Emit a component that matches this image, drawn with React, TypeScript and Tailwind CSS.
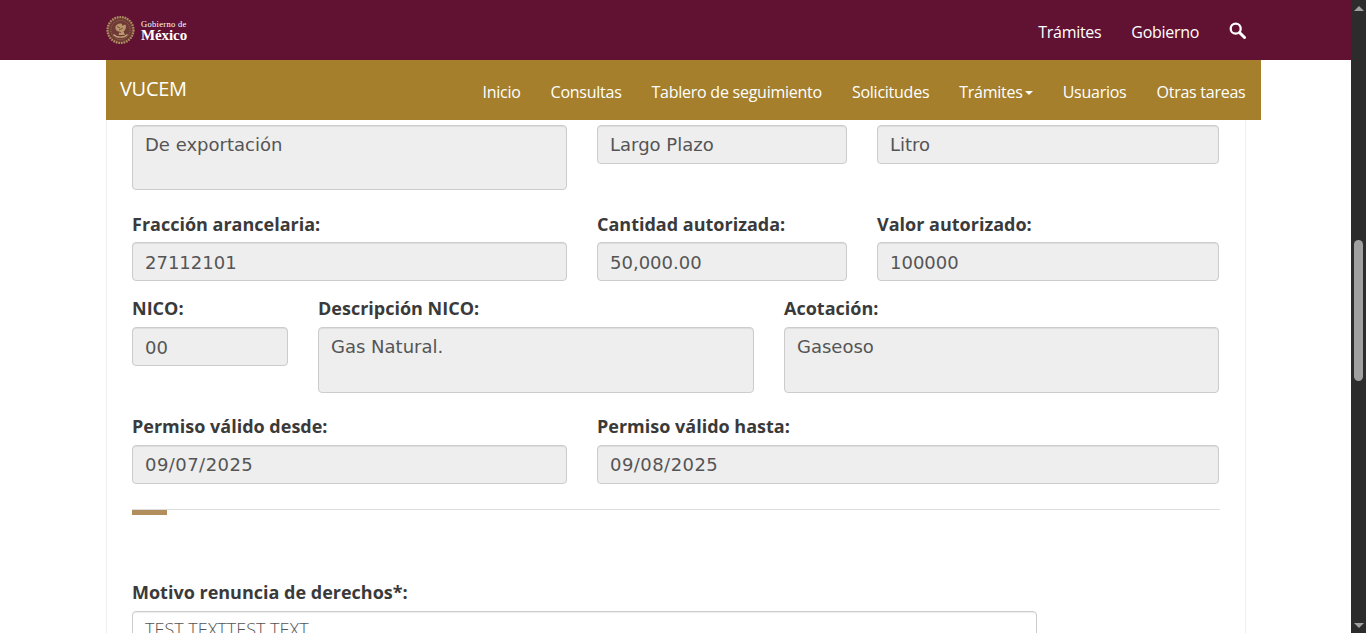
const navLinks = ["Inicio", "Consultas", "Tablero de seguimiento", "Solicitudes"];

function Field({
  label,
  value,
  className,
  height = "h-[39px]",
  labelGap = "mb-[9px]",
  valueClass = "pt-[6px]",
}: {
  label?: string;
  value: string;
  className: string;
  height?: string;
  labelGap?: string;
  valueClass?: string;
}) {
  return (
    <div className={className}>
      {label && <label className={`${labelGap} block text-[18px] font-bold leading-[20px] text-[#3a3a3a]`}>{label}</label>}
      <div
        className={`rounded-[4px] border border-[#ccc] bg-[#eee] px-3 font-['DejaVu_Sans',sans-serif] text-[18px] leading-[26px] text-[#555] shadow-[inset_0_1px_1px_rgba(0,0,0,0.075)] ${height} ${valueClass}`}
      >
        {value}
      </div>
    </div>
  );
}

function Logo() {
  return (
    <div className="flex items-center gap-[6px]">
      <svg width="29" height="30" viewBox="0 0 29 30" aria-hidden="true">
        <circle cx="14.5" cy="15" r="13.4" fill="#6f3a35" />
        <circle cx="14.5" cy="15" r="13" fill="none" stroke="#b08f63" strokeWidth="2.2" strokeDasharray="1.6 1" />
        <circle cx="14.5" cy="15" r="9.6" fill="none" stroke="#94714f" strokeWidth="1" strokeDasharray="1 1" />
        <path d="M9 12.5c1-3 4-4.5 6-4 1 .2 1.500 1.200 1 2.200l3.500-1.200c1 2 .5 5.500-2 7l1.500 3.500h-6.500l.8-3.200c-2.300-.5-4.300-2-3.800-4.300z" fill="#b8956a" />
        <path d="M11 11.500l3 1.500M13 15l4-2M12 17l3 .5" stroke="#6f3a35" strokeWidth=".8" />
        <path d="M7.500 19.500c3.500 3.600 10.500 3.600 14 0" fill="none" stroke="#c4a27a" strokeWidth="1.300" />
      </svg>
      <div className="mt-[1px] font-['Liberation_Serif',serif] text-white">
        <div className="text-[8.5px] leading-[9px] tracking-[0.3px]">Gobierno de</div>
        <div className="text-[15px] font-bold leading-[12px] tracking-[-0.1px]">México</div>
      </div>
    </div>
  );
}

export default function App() {
  return (
    <div className="flex h-[633px] overflow-hidden bg-white font-['Open_Sans',sans-serif]">
      <div className="w-[1351px] shrink-0">
        <header className="h-[60px] bg-[#611232]">
          <div className="ml-[106px] flex h-full w-[1140px] items-center justify-between">
            <Logo />
            <nav className="mt-[3px] flex items-center gap-[30px] text-[16px] tracking-[-0.3px] text-white">
              <a>Trámites</a>
              <a>Gobierno</a>
              <svg width="17" height="17" viewBox="0 0 17 17" className="-mt-[2px]" aria-hidden="true">
                <circle cx="6.700" cy="6.700" r="5" fill="none" stroke="#fff" strokeWidth="2.300" />
                <path d="M10.500 10.500l5 5" stroke="#fff" strokeWidth="3" strokeLinecap="round" />
              </svg>
            </nav>
          </div>
        </header>

        <div className="ml-[106px] flex h-[60px] w-[1155px] items-center justify-between bg-[#a57f2c] pl-[14px] pr-[15.5px] text-white">
          <span className="-mt-[3px] text-[20px] tracking-[-0.3px]">VUCEM</span>
          <nav className="mt-[4px] flex items-center gap-[30px] text-[16px] tracking-[-0.25px]">
            {navLinks.map((link) => (
              <a key={link}>{link}</a>
            ))}
            <a className="flex items-center">
              Trámites
              <span className="ml-[2px] mt-[2px] h-0 w-0 border-x-[4px] border-t-[4px] border-x-transparent border-t-white" />
            </a>
            <a>Usuarios</a>
            <a>Otras tareas</a>
          </nav>
        </div>

        <main className="ml-[106px] h-[513px] w-[1140px] overflow-hidden border-x border-[#eee] pl-[25px] pr-[26px] pt-[5px]">
          <div className="flex gap-[30px]">
            <Field value="De exportación" className="w-[435px]" height="h-[65px]" />
            <Field value="Largo Plazo" className="w-[250px]" />
            <Field value="Litro" className="w-[342px]" />
          </div>

          <div className="mt-[24px] flex gap-[30px]">
            <Field label="Fracción arancelaria:" value="27112101" className="w-[435px]" labelGap="mb-[8px]" valueClass="pt-[7px]" />
            <Field label="Cantidad autorizada:" value="50,000.00" className="w-[250px]" labelGap="mb-[8px]" valueClass="pt-[7px]" />
            <Field label="Valor autorizado:" value="100000" className="w-[342px]" labelGap="mb-[8px]" valueClass="pt-[7px]" />
          </div>

          <div className="mt-[17px] flex gap-[30px]">
            <Field label="NICO:" value="00" className="w-[156px]" valueClass="pt-[7px]" />
            <Field label="Descripción NICO:" value="Gas Natural." className="w-[436px]" height="h-[66px]" />
            <Field label="Acotación:" value="Gaseoso" className="w-[435px]" height="h-[66px]" />
          </div>

          <div className="mt-[23px] flex gap-[30px]">
            <Field label="Permiso válido desde:" value="09/07/2025" className="w-[435px]" valueClass="pt-[6px] tracking-[0.45px]" />
            <Field label="Permiso válido hasta:" value="09/08/2025" className="w-[622px]" valueClass="pt-[6px] tracking-[0.45px]" />
          </div>

          <div className="mt-[25px] h-px w-[1088px] bg-[#ddd]" />
          <div className="h-[5px] w-[35px] bg-[#b38e5d]" />

          <label className="mt-[67px] block text-[18px] font-bold leading-[20px] text-[#3a3a3a]">Motivo renuncia de derechos*:</label>
          <div className="mt-[9px] h-[80px] w-[905px] rounded-[4px] border border-[#ccc] px-3 pt-[4px] text-[18px] font-light leading-[26px] text-[#555] shadow-[inset_0_1px_1px_rgba(0,0,0,0.075)]">
            TEST TEXTTEST TEXT
          </div>
        </main>
      </div>

      <div className="flex h-full w-[15px] shrink-0 flex-col items-center bg-[#2c2c2c] pb-[5px] pt-[6px]">
        <span className="h-0 w-0 border-x-[5px] border-b-[5px] border-x-transparent border-b-[#a0a0a0]" />
        <span className="mt-[229px] h-[141px] w-[9px] rounded-full bg-[#a0a0a0]" />
        <span className="mt-auto h-0 w-0 border-x-[5px] border-t-[5px] border-x-transparent border-t-[#a0a0a0]" />
      </div>
    </div>
  );
}
